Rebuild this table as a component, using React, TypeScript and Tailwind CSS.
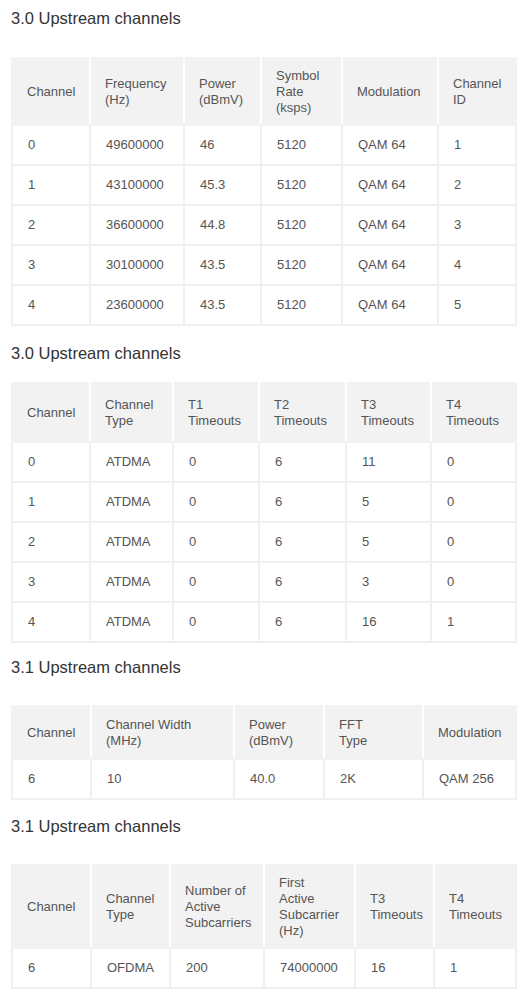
import React from 'react';

type Section = {
  title: string;
  gapTop: string;
  gapTitle: string;
  headH: string;
  widths: string[];
  head: string[][];
  rows: string[][];
};

const sections: Section[] = [
  {
    title: '3.0 Upstream channels',
    gapTop: 'pt-[6px]',
    gapTitle: 'mb-[27px]',
    headH: 'h-[67px]',
    widths: ['w-[78px]', 'w-[94px]', 'w-[77px]', 'w-[81px]', 'w-[96px]', 'w-[78px]'],
    head: [['Channel'], ['Frequency', '(Hz)'], ['Power', '(dBmV)'], ['Symbol', 'Rate', '(ksps)'], ['Modulation'], ['Channel', 'ID']],
    rows: [
      ['0', '49600000', '46', '5120', 'QAM 64', '1'],
      ['1', '43100000', '45.3', '5120', 'QAM 64', '2'],
      ['2', '36600000', '44.8', '5120', 'QAM 64', '3'],
      ['3', '30100000', '43.5', '5120', 'QAM 64', '4'],
      ['4', '23600000', '43.5', '5120', 'QAM 64', '5'],
    ],
  },
  {
    title: '3.0 Upstream channels',
    gapTop: 'pt-[15px]',
    gapTitle: 'mb-[17px]',
    headH: 'h-[59px]',
    widths: ['w-[78px]', 'w-[83px]', 'w-[86px]', 'w-[87px]', 'w-[85px]', 'w-[85px]'],
    head: [['Channel'], ['Channel', 'Type'], ['T1', 'Timeouts'], ['T2', 'Timeouts'], ['T3', 'Timeouts'], ['T4', 'Timeouts']],
    rows: [
      ['0', 'ATDMA', '0', '6', '11', '0'],
      ['1', 'ATDMA', '0', '6', '5', '0'],
      ['2', 'ATDMA', '0', '6', '5', '0'],
      ['3', 'ATDMA', '0', '6', '3', '0'],
      ['4', 'ATDMA', '0', '6', '16', '1'],
    ],
  },
  {
    title: '3.1 Upstream channels',
    gapTop: 'pt-[12px]',
    gapTitle: 'mb-[26px]',
    headH: 'h-[53px]',
    widths: ['w-[79px]', 'w-[143px]', 'w-[90px]', 'w-[99px]', 'w-[93px]'],
    head: [['Channel'], ['Channel Width', '(MHz)'], ['Power', '(dBmV)'], ['FFT', 'Type'], ['Modulation']],
    rows: [['6', '10', '40.0', '2K', 'QAM 256']],
  },
  {
    title: '3.1 Upstream channels',
    gapTop: 'pt-[14px]',
    gapTitle: 'mb-[26px]',
    headH: 'h-[83px]',
    widths: ['w-[79px]', 'w-[79px]', 'w-[94px]', 'w-[91px]', 'w-[79px]', 'w-[82px]'],
    head: [['Channel'], ['Channel', 'Type'], ['Number of', 'Active', 'Subcarriers'], ['First', 'Active', 'Subcarrier', '(Hz)'], ['T3', 'Timeouts'], ['T4', 'Timeouts']],
    rows: [['6', 'OFDMA', '200', '74000000', '16', '1']],
  },
];

const ChannelTable = ({ s }: { s: Section }) => (
  <div className={s.gapTop}>
    <h2 className={`text-[16.5px] leading-[24px] text-[#333] pl-[1px] ${s.gapTitle}`}>{s.title}</h2>
    <table className="table-fixed w-[504px] ml-[1px] border-collapse text-[13px] leading-[16px] text-[#555]">
      <thead>
        <tr className={s.headH}>
          {s.head.map((h, i) => (
            <th
              key={i}
              className={`${s.widths[i]} bg-[#f2f2f2] border-2 border-[#f2f2f2] border-r-white last:border-r-[#f2f2f2] pl-[14px] pr-1 text-left font-normal align-middle`}
            >
              {h.map((line, j) => (
                <div key={j}>{line}</div>
              ))}
            </th>
          ))}
        </tr>
      </thead>
      <tbody>
        {s.rows.map((r, i) => (
          <tr key={i} className="h-[40px]">
            {r.map((c, j) => (
              <td key={j} className="border-2 border-[#f0f0f0] pl-[15px] pr-1 align-middle">
                {c}
              </td>
            ))}
          </tr>
        ))}
      </tbody>
    </table>
  </div>
);

export default function App() {
  return (
    <div className="w-[532px] min-h-[998px] bg-white px-[10px] font-['Liberation_Sans',Arial,sans-serif]">
      {sections.map((s, i) => (
        <ChannelTable key={i} s={s} />
      ))}
    </div>
  );
}
